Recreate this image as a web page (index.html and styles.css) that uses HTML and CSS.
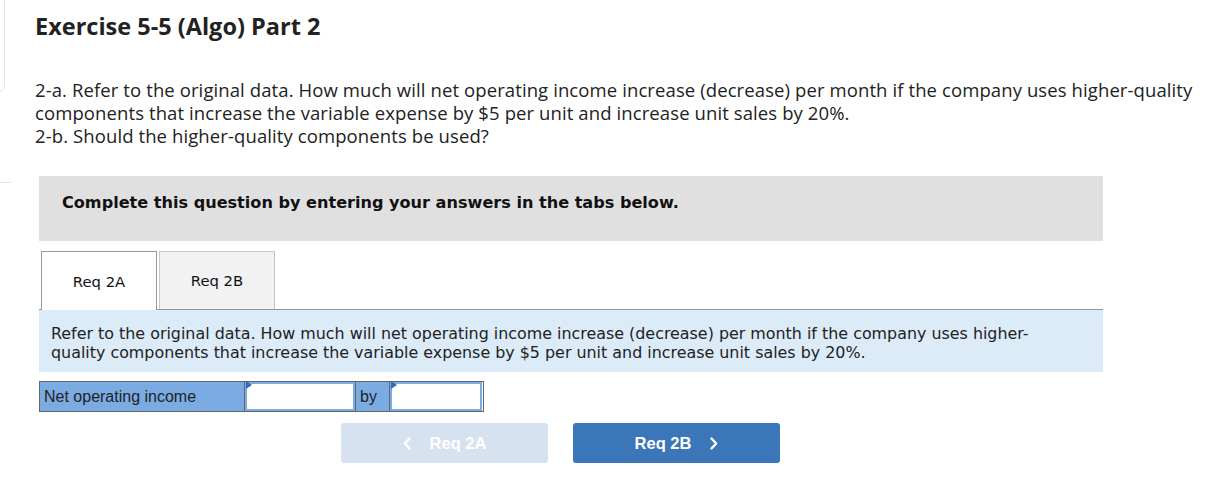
FILE: index.html
```html
<!DOCTYPE html>
<html>
<head>
<meta charset="utf-8">
<link rel="stylesheet" href="styles.css">
</head>
<body>
<div class="edge edge-top"></div>
<div class="edge edge-bottom"></div>
<main class="page">
  <h1 class="title">Exercise 5-5 (Algo) Part 2</h1>
  <p class="question">2-a. Refer to the original data. How much will net operating income increase (decrease) per month if the company uses higher-quality components that increase the variable expense by $5 per unit and increase unit sales by 20%.<br>2-b. Should the higher-quality components be used?</p>
  <section class="panel">
    <div class="instructions">Complete this question by entering your answers in the tabs below.</div>
    <div class="tabs">
      <div class="tab tab-active">Req 2A</div>
      <div class="tab">Req 2B</div>
    </div>
    <div class="prompt">Refer to the original data. How much will net operating income increase (decrease) per month if the company uses higher-quality components that increase the variable expense by $5 per unit and increase unit sales by 20%.</div>
    <div class="answer-row">
      <div class="cell label">Net operating income</div>
      <div class="cell input input-wide"></div>
      <div class="cell label by">by</div>
      <div class="cell input input-narrow"></div>
    </div>
    <div class="nav">
      <button class="btn btn-prev"><svg class="chev" width="8" height="13" viewBox="0 0 8 13"><polyline points="6.5,1.5 1.8,6.5 6.5,11.5" fill="none" stroke="#fff" stroke-width="2.4" stroke-linecap="round" stroke-linejoin="round"/></svg>Req 2A</button>
      <button class="btn btn-next">Req 2B<svg class="chev" width="8" height="13" viewBox="0 0 8 13"><polyline points="1.5,1.5 6.2,6.5 1.5,11.5" fill="none" stroke="#fff" stroke-width="2.4" stroke-linecap="round" stroke-linejoin="round"/></svg></button>
    </div>
  </section>
</main>
</body>
</html>
```
FILE: styles.css
```css
html, body { margin: 0; padding: 0; background: #fff; }
body { font-family: "Open Sans", "Lato", sans-serif; color: #222; position: relative; overflow: hidden; height: 489px; }

.edge { position: absolute; border: 1px solid #e4e4e4; }
.edge-top { left: -300px; top: -20px; width: 303px; height: 110px; border-radius: 6px; }
.edge-bottom { left: -300px; top: 182px; width: 310px; height: 280px; border-right: none; border-bottom: none; }

.page { padding: 12px 0 0 35px; width: 1170px; }

.title { margin: 0; font-size: 23.5px; font-weight: 700; line-height: 28px; color: #222; }

.question { margin: 38px 0 0 0; font-size: 18.5px; line-height: 23px; letter-spacing: 0.1px; color: #222; }

.panel { margin: 29px 0 0 4px; width: 1064px; }

.instructions {
  background: #e0e0e0; height: 65px; box-sizing: border-box; padding: 17px 0 0 23px;
  font-family: "DejaVu Sans", Verdana, sans-serif; font-weight: 700;
  font-size: 16.1px; line-height: 19px; color: #111;
}

.tabs { display: flex; gap: 2px; margin-top: 10px; padding-left: 2px; border-bottom: 1px solid #999; height: 58px; }
.tab {
  width: 114px; height: 57px; display: flex; align-items: center; justify-content: center;
  font-family: "DejaVu Sans", Verdana, sans-serif; font-size: 14.8px; color: #111;
  background: #f2f2f2; border: 1px solid #c8c8c8; border-bottom: none;
}
.tab-active { background: #fff; border-color: #999; height: 58px; margin-bottom: -1px; }

.prompt {
  background: #dbebf8; padding: 14px 30px 10px 12px; font-family: "DejaVu Sans", Verdana, sans-serif;
  font-size: 15.9px; line-height: 19px; color: #222;
}

.answer-row { display: flex; margin-top: 9px; height: 29px; width: 443px; border: 1px solid #666; }
.cell { height: 29px; box-sizing: border-box; }
.label { background: #7aace3; font-family: "Liberation Sans", Arial, sans-serif; font-size: 16px; line-height: 29px; padding-left: 4px; color: #222; }
.answer-row .label:first-child { width: 205px; border-right: 1px solid #666; }
.by { width: 35px; border-left: 1px solid #666; border-right: 1px solid #666; }
.input { background: #fff; border: 2px solid #7aace3; position: relative; }
.input::before { content: ""; position: absolute; left: 0; top: 0; border-style: solid; border-width: 4px 0 4px 6px; border-color: transparent transparent transparent #2b6cc4; transform: translate(-1px, -3px); }
.input-wide { width: 110px; }
.input-narrow { width: 92px; }

.nav { display: flex; gap: 25px; margin: 11px 0 0 302px; }
.btn {
  width: 207px; height: 40px; border: none; border-radius: 3px; color: #fff;
  font-family: "Liberation Sans", Arial, sans-serif; font-weight: 700; font-size: 16.5px;
  display: flex; align-items: center; justify-content: center; gap: 19px; padding: 0;
}
.btn-prev { background: #d6e2f0; }
.btn-next { background: #3a76b8; }
.chev { display: block; }
```
